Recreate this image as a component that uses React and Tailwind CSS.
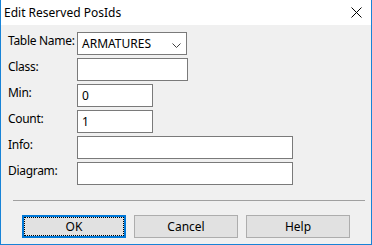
import React from 'react';

const FONT = "font-['Segoe_UI','Noto_Sans',sans-serif]";

const Row = ({ label, width, value, combo }) => (
  <div className="flex h-[23px]">
    <div className="w-[69px] shrink-0 whitespace-nowrap pt-[1px] text-[12px] leading-[16px] tracking-[-0.3px] text-black">{label}</div>
    <div
      className="relative flex h-[23px] items-center border border-[#7a7a7a] bg-white pl-[4px] text-[12px] text-black"
      style={{ width }}
    >
      {value}
      {combo && (
        <svg className="absolute right-[5px] top-[10px]" width="9" height="5" viewBox="0 0 9 5">
          <polyline points="0.5,0.5 4.5,4.5 8.5,0.5" fill="none" stroke="#404040" strokeWidth="1" />
        </svg>
      )}
    </div>
  </div>
);

const Btn = ({ children, focused }) => (
  <div
    className={`relative flex h-[23px] w-[104px] items-center justify-center bg-[#e1e1e1] text-[12px] text-black ${
      focused ? 'border-2 border-[#0078d7]' : 'border border-[#adadad]'
    }`}
  >
    {focused && <div className="absolute inset-0 border border-dotted border-black" />}
    <span className="relative">{children}</span>
  </div>
);

export default function App() {
  return (
    <div className={`flex h-[245px] w-[372px] flex-col border-x border-b border-[#1883d7] bg-[#f0f0f0] ${FONT}`}>
      {/* title bar */}
      <div className="flex h-[25px] items-center justify-between bg-white pl-[3px] pr-[9px]">
        <span className="text-[12px] text-black">Edit Reserved PosIds</span>
        <svg width="11" height="11" viewBox="0 0 11 11">
          <path d="M0.5 0.5 L10.5 10.5 M10.5 0.5 L0.5 10.5" stroke="#000" strokeWidth="1" />
        </svg>
      </div>

      <div className="flex flex-col gap-[3px] pl-[7px] pt-[7px]">
        <Row label="Table Name:" width={110} value="ARMATURES" combo />
        <Row label="Class:" width={111} />
        <Row label="Min:" width={76} value="0" />
        <Row label="Count:" width={76} value="1" />
        <Row label="Info:" width={216} />
        <Row label="Diagram:" width={216} />
      </div>

      <div className="ml-[12px] mr-[6px] mt-[15px] h-[1px] bg-[#a0a0a0]" />

      <div className="mt-[14px] flex gap-[8px] pl-[21px]">
        <Btn focused>OK</Btn>
        <Btn>Cancel</Btn>
        <Btn>Help</Btn>
      </div>
    </div>
  );
}
